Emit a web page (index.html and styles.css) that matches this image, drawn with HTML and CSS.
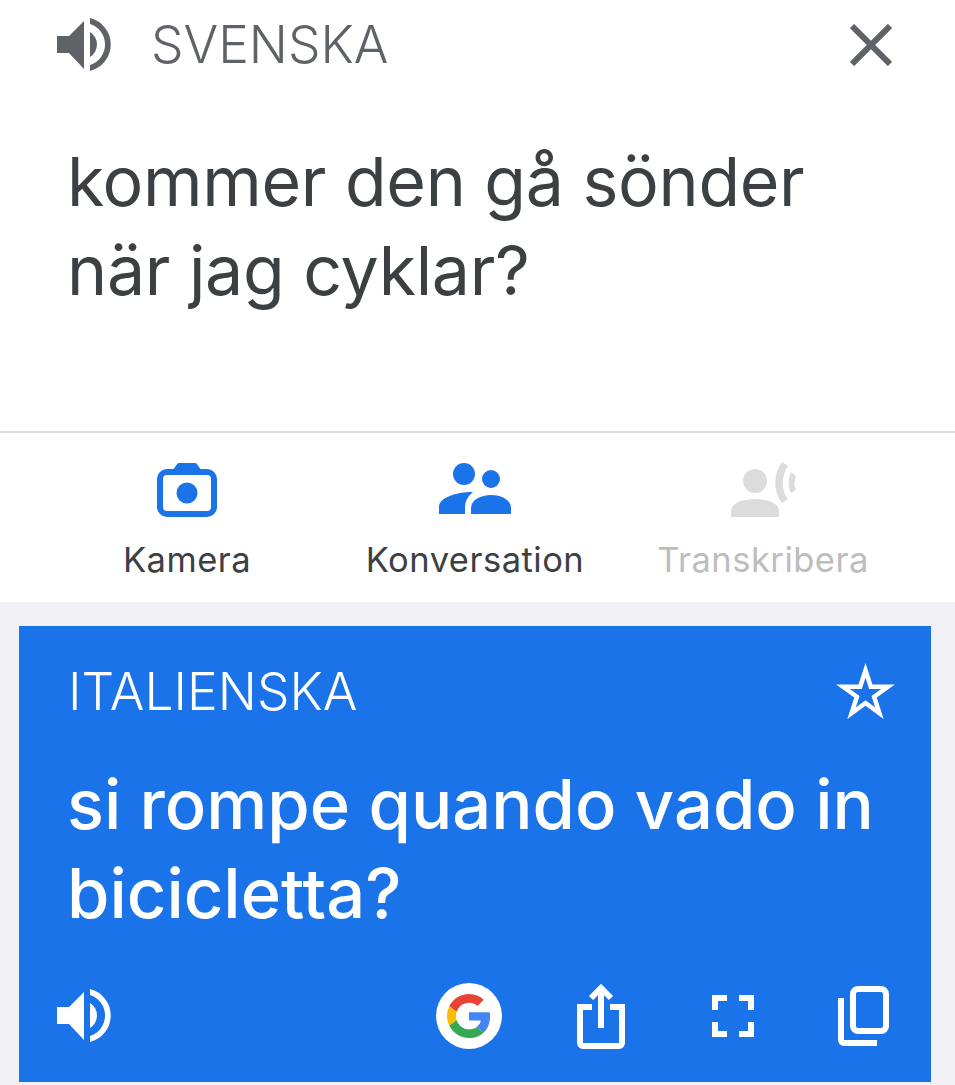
FILE: index.html
```html
<!DOCTYPE html>
<html lang="sv">
<head>
    <meta charset="UTF-8">
    <meta name="viewport" content="width=device-width, initial-scale=1.0">
    <title>Översätt</title>
    <link rel="stylesheet" href="styles.css">
</head>
<body>
    <section class="source">
        <div class="source-head">
            <svg class="icon-speaker" viewBox="0 0 54 54">
                <path d="M0 18H12L27 3V51L12 35H0Z"/>
                <path d="M33 14A14.7 14.7 0 0 1 33 39Z"/>
                <path d="M33 0A27.3 27.3 0 0 1 33 53V47A21.5 21.5 0 0 0 33 6Z"/>
            </svg>
            <span class="lang-name">SVENSKA</span>
            <svg class="icon-close" viewBox="0 0 42 42">
                <path d="M2 2L40 40M40 2L2 40"/>
            </svg>
        </div>
        <p class="source-text">kommer den gå sönder<br>när jag cyklar?</p>
    </section>

    <nav class="tools">
        <div class="tool">
            <svg class="tool-icon" viewBox="0 0 80 56">
                <rect class="camera-body" x="13" y="10" width="54" height="42" rx="7"/>
                <path class="blue" d="M25 9L31 1H49L55 9Z"/>
                <circle class="blue" cx="40" cy="31" r="10.5"/>
            </svg>
            <span class="tool-label">Kamera</span>
        </div>
        <div class="tool">
            <svg class="tool-icon" viewBox="0 0 80 56">
                <circle class="blue" cx="29" cy="12" r="11"/>
                <circle class="blue" cx="56" cy="17" r="9"/>
                <path class="blue" d="M4 52V45C4 36 20 30 38 30C33 34 30 39 30 46V52Z"/>
                <path class="blue" d="M36 52V46C36 38 46 33 56 33C66 33 76 38 76 46V52Z"/>
            </svg>
            <span class="tool-label">Konversation</span>
        </div>
        <div class="tool tool-off">
            <svg class="tool-icon" viewBox="0 0 80 56">
                <circle class="grey" cx="32" cy="19" r="12"/>
                <path class="grey" d="M8 55V49C8 41 20 37 32 37C44 37 56 41 56 49V55Z"/>
                <path class="grey" d="M59 0L65 4C58 14 58 29 65 37L59 41C50 30 50 12 59 0Z"/>
                <path class="grey" d="M68 10L73 14C71 19 71 24 73 28L68 31C65 25 65 16 68 10Z"/>
            </svg>
            <span class="tool-label">Transkribera</span>
        </div>
    </nav>

    <main class="result-wrap">
        <section class="result">
            <div class="result-head">
                <span class="lang-name">ITALIENSKA</span>
                <svg class="icon-star" viewBox="0 0 59 56">
                    <path d="M29.5 7.3L34.8 23.7H52L38.1 33.8L43.4 50.2L29.5 40L15.6 50.2L20.9 33.8L7 23.7H24.2Z"/>
                </svg>
            </div>
            <p class="result-text">si rompe quando vado in<br>bicicletta?</p>
            <div class="result-actions">
                <svg class="icon-speaker white" viewBox="0 0 54 54">
                    <path d="M0 18H12L27 3V51L12 35H0Z"/>
                    <path d="M33 14A14.7 14.7 0 0 1 33 39Z"/>
                    <path d="M33 0A27.3 27.3 0 0 1 33 53V47A21.5 21.5 0 0 0 33 6Z"/>
                </svg>
                <div class="google-badge">
                    <svg class="icon-google" viewBox="0 0 48 48">
                        <path fill="#4285f4" d="M46.98 24.55c0-1.57-.15-3.09-.38-4.55H24v9.02h12.94c-.58 2.96-2.26 5.48-4.78 7.18l7.73 6c4.51-4.18 7.09-10.36 7.09-17.65z"/>
                        <path fill="#fbbc05" d="M10.53 28.59A14.5 14.5 0 0 1 9.77 24c0-1.6.27-3.14.76-4.59l-7.98-6.19A23.99 23.99 0 0 0 0 24c0 3.88.92 7.54 2.56 10.78l7.97-6.19z"/>
                        <path fill="#ea4335" d="M24 9.5c3.54 0 6.71 1.22 9.21 3.6l6.85-6.85C35.9 2.38 30.47 0 24 0 14.62 0 6.51 5.38 2.56 13.22l7.98 6.19C12.43 13.72 17.74 9.5 24 9.5z"/>
                        <path fill="#34a853" d="M24 48c6.48 0 11.93-2.13 15.89-5.81l-7.73-6c-2.15 1.45-4.92 2.3-8.16 2.3-6.26 0-11.57-4.22-13.47-9.91l-7.98 6.19C6.51 42.62 14.62 48 24 48z"/>
                    </svg>
                </div>
                <svg class="icon-share" viewBox="0 0 48 66">
                    <path d="M15 24H3V60A3 3 0 0 0 6 63H42A3 3 0 0 0 45 60V24H33"/>
                    <path d="M24 45V4M14 15L24 5L34 15"/>
                </svg>
                <svg class="icon-focus" viewBox="0 0 42 42">
                    <path d="M15 3H3V15M27 3H39V15M39 27V39H27M15 39H3V27"/>
                </svg>
                <svg class="icon-copy" viewBox="0 0 51 60">
                    <rect x="15" y="3" width="33" height="42" rx="5"/>
                    <path d="M3 12V54A3 3 0 0 0 6 57H39"/>
                </svg>
            </div>
        </section>
    </main>
</body>
</html>
```

FILE: styles.css
```css
body {
    margin: 0;
    height: 1085px;
    overflow: hidden;
    display: flex;
    flex-direction: column;
    background-color: #f1f0f5;
    font-family: Inter, "Liberation Sans", sans-serif;
}

svg {
    display: block;
    flex: none;
}

p {
    margin: 0;
}

.source {
    height: 431px;
    background-color: #fff;
    border-bottom: 2px solid #dcdcdc;
}

.source-head {
    display: flex;
    align-items: center;
    height: 54px;
    padding: 18px 63px 0 57px;
}

.lang-name {
    font-size: 51.5px;
    line-height: 54px;
    font-weight: 350;
    color: #5f6368;
}

.icon-speaker {
    width: 54px;
    height: 54px;
    fill: #5f6368;
}

.icon-speaker.white {
    fill: #fff;
}

.source-head .lang-name {
    margin: 0 0 3px 40px;
}

.icon-close {
    width: 42px;
    height: 42px;
    margin-left: auto;
    fill: none;
    stroke: #5f6368;
    stroke-width: 6;
}

.source-text {
    padding: 65px 20px 0 67px;
    font-size: 68px;
    line-height: 89px;
    letter-spacing: -0.3px;
    color: #3c4043;
}

.tools {
    display: grid;
    grid-template-columns: repeat(3, 288px);
    height: 169px;
    padding-left: 43px;
    background-color: #fff;
}

.tool {
    display: flex;
    flex-direction: column;
    align-items: center;
    padding-top: 29px;
}

.tool-icon {
    width: 80px;
    height: 56px;
}

.camera-body {
    fill: none;
    stroke: #1a73e8;
    stroke-width: 6;
}

.blue {
    fill: #1a73e8;
}

.grey {
    fill: #dcdcdc;
}

.tool-label {
    margin-top: 22px;
    font-size: 34.5px;
    line-height: 40px;
    letter-spacing: 0.5px;
    color: #3c4043;
}

.tool-off .tool-label {
    color: #bdbdbd;
}

.result-wrap {
    padding: 24px 24px 3px 19px;
}

.result {
    height: 456px;
    box-sizing: border-box;
    padding: 37px 36px 0 49px;
    background-color: #1a73e8;
    color: #fff;
}

.result-head {
    display: flex;
    align-items: center;
    justify-content: space-between;
}

.result .lang-name {
    color: #fff;
}

.icon-star {
    width: 59px;
    height: 56px;
    fill: none;
    stroke: #fff;
    stroke-width: 4.5;
}

.result-text {
    padding-top: 41px;
    margin: 0 -20px 0 -1px;
    font-size: 68.7px;
    line-height: 89px;
    font-weight: 500;
}

.result-actions {
    display: flex;
    align-items: center;
    margin: 45px 6px 0 -11px;
}

.google-badge {
    display: flex;
    align-items: center;
    justify-content: center;
    width: 66px;
    height: 66px;
    margin-left: 325px;
    border-radius: 50%;
    background-color: #fff;
}

.icon-google {
    width: 44px;
    height: 44px;
}

.icon-share {
    width: 48px;
    height: 66px;
    margin-left: 75px;
    fill: none;
    stroke: #fff;
    stroke-width: 6;
}

.icon-focus {
    width: 42px;
    height: 42px;
    margin-left: 87px;
    fill: none;
    stroke: #fff;
    stroke-width: 6;
}

.icon-copy {
    width: 51px;
    height: 60px;
    margin-left: 84px;
    fill: none;
    stroke: #fff;
    stroke-width: 6;
}
```
